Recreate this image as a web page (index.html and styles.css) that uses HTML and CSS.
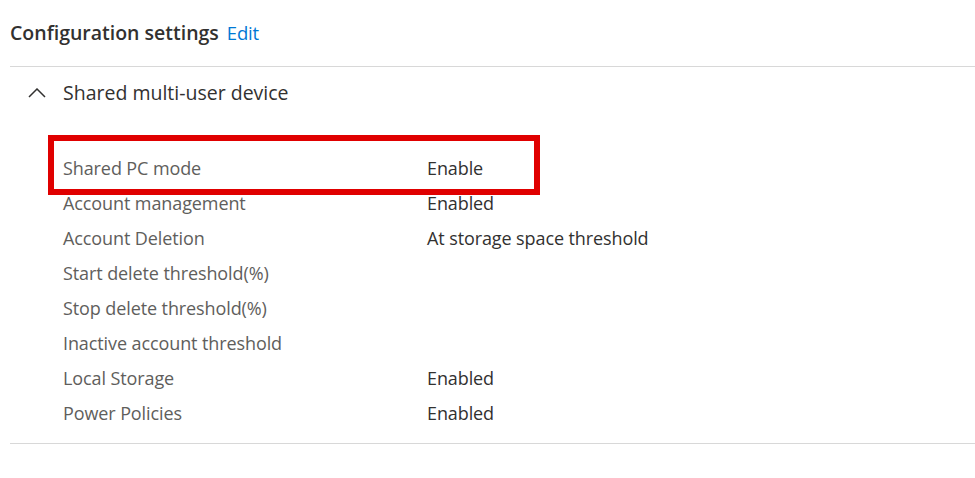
FILE: index.html
```html
<!DOCTYPE html>
<html>
<head>
<meta charset="utf-8">
<link rel="stylesheet" href="styles.css">
</head>
<body>
<div class="page">
  <div class="header">
    <span class="title">Configuration settings</span>
    <a class="edit">Edit</a>
  </div>
  <div class="section">
    <div class="section-head">
      <svg class="chevron" width="18" height="10" viewBox="0 0 18 10"><path d="M1 9 L9 1 L17 9" fill="none" stroke="#323130" stroke-width="1.5"/></svg>
      <span class="section-title">Shared multi-user device</span>
    </div>
    <div class="rows">
      <div class="row highlight"><span class="label">Shared PC mode</span><span class="value">Enable</span></div>
      <div class="row"><span class="label">Account management</span><span class="value">Enabled</span></div>
      <div class="row"><span class="label">Account Deletion</span><span class="value">At storage space threshold</span></div>
      <div class="row"><span class="label">Start delete threshold(%)</span><span class="value"></span></div>
      <div class="row"><span class="label">Stop delete threshold(%)</span><span class="value"></span></div>
      <div class="row"><span class="label">Inactive account threshold</span><span class="value"></span></div>
      <div class="row"><span class="label">Local Storage</span><span class="value">Enabled</span></div>
      <div class="row"><span class="label">Power Policies</span><span class="value">Enabled</span></div>
    </div>
  </div>
</div>
</body>
</html>
```
FILE: styles.css
```css
html, body { margin: 0; padding: 0; background: #fff; }
body { font-family: "Open Sans", "Noto Sans", sans-serif; color: #323130; }
.page { padding: 19px 0 0 10px; }
.header { display: flex; align-items: baseline; gap: 8px; height: 26px; padding-bottom: 21px; border-bottom: 1px solid #d8d8d8; }
.title { font-size: 19.5px; font-weight: 600; color: #323130; letter-spacing: 0; }
.edit { font-size: 18.5px; color: #0078d4; letter-spacing: -0.2px; }
.section { border-bottom: 1px solid #d8d8d8; padding-bottom: 13px; }
.section-head { display: flex; align-items: center; height: 52px; padding-left: 18px; gap: 17px; margin-top: -1px; }
.chevron { display: block; margin-top: 2px; }
.section-title { font-size: 19.5px; color: #323130; letter-spacing: 0; }
.rows { padding-top: 32px; }
.row { display: flex; align-items: center; height: 35px; padding-left: 53px; position: relative; font-size: 18px; letter-spacing: -0.1px; }
.label { width: 364px; color: #605e5c; }
.value { color: #323130; }
.highlight::after { content: ""; position: absolute; left: -15px; top: -15px; width: 480px; height: 48px; border: 6px solid #e00000; margin-left: 53px; }
```
